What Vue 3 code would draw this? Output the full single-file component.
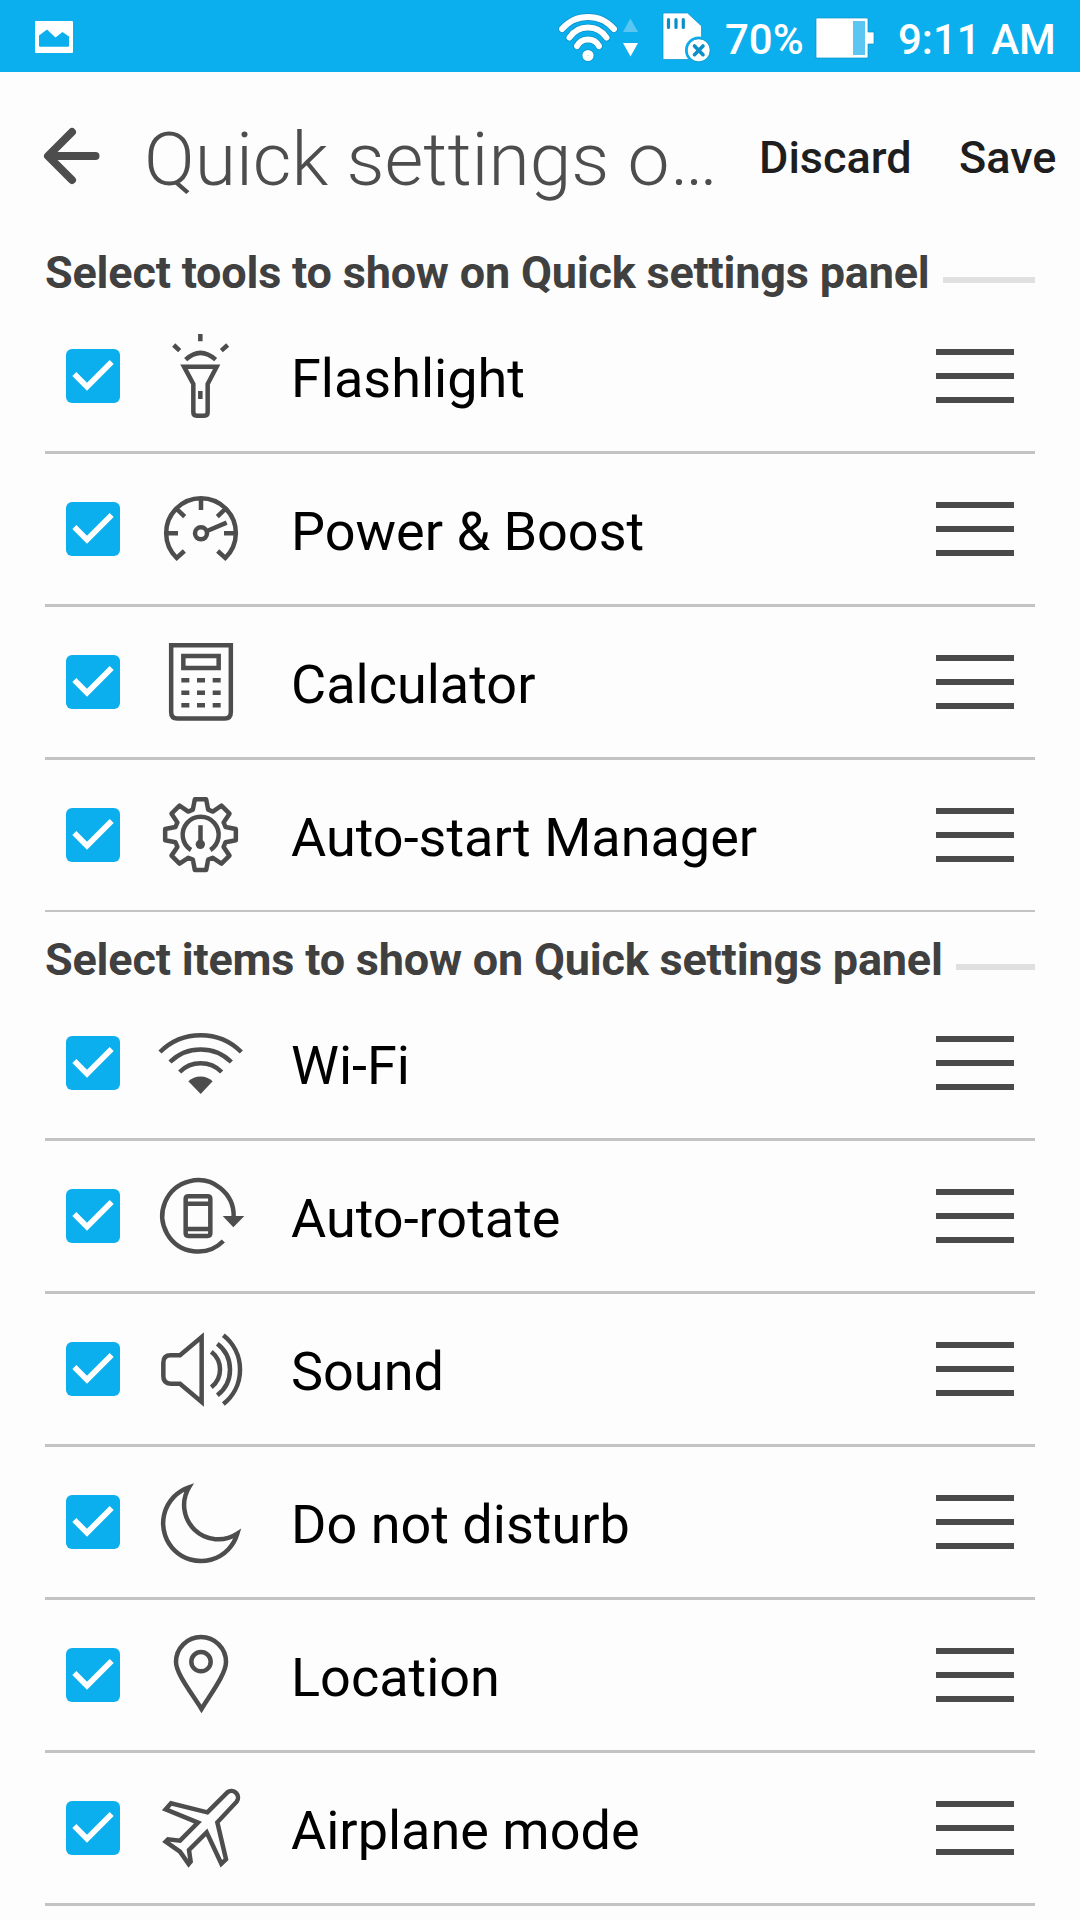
<template>
  <div class="screen">
    <header class="status">
      <svg class="status-photo" viewBox="0 0 40 33">
        <path fill="#fff" fill-rule="evenodd" d="M1 0H37Q38 0 38 1V31Q38 32 37 32H1Q0 32 0 31V1Q0 0 1 0ZM4 14.500V24.700Q4 25.700 5 25.700H33Q34 25.700 34 24.700V15.500L27.500 11L20.500 16.500L12 8.500Z" />
      </svg>
      <svg class="status-wifi" viewBox="0 0 60 50" fill="none" stroke-linecap="round">
        <g stroke="#0b8fc7" stroke-width="7.500">
          <path d="M3 16A34 34 0 0 1 55 16M10.500 24.500A22 22 0 0 1 47.500 24.500M18 33A12.500 12.500 0 0 1 40 33" />
          <circle cx="29" cy="42.500" r="2.500" />
        </g>
        <g stroke="#fff" stroke-width="6">
          <path d="M3 16A34 34 0 0 1 55 16M10.500 24.500A22 22 0 0 1 47.500 24.500M18 33A12.500 12.500 0 0 1 40 33" />
          <circle cx="29" cy="42.500" r="2.600" />
        </g>
      </svg>
      <svg class="status-traffic" viewBox="0 0 16 40">
        <path fill="#5bc6f2" d="M7.300 0.500L15 14H0Z" />
        <path fill="#fff" d="M0 25H15L7.500 38.500Z" />
      </svg>
      <svg class="status-card" viewBox="0 0 48 50">
        <path fill="#fff" stroke="#0b8fc7" stroke-width="0.700" d="M2 0H25.500L39.500 13V32H28V46.500H2Q1 46.500 1 45.500V1Q1 0 2 0Z" />
        <path stroke="#0b8fc7" stroke-width="3.200" stroke-linecap="round" d="M6.500 6.500V14.500M14 6.500V14.500M21.300 6.500V14.500" />
        <circle cx="36.700" cy="37.300" r="12.500" fill="#fff" stroke="#0cafee" stroke-width="2.500" />
        <circle cx="36.700" cy="37.300" r="11.500" fill="none" stroke="#0b8fc7" stroke-width="0.700" />
        <path stroke="#0b8fc7" stroke-width="3.600" stroke-linecap="round" d="M32.500 33L41 41.700M41 33L32.500 41.700" />
      </svg>
      <span class="status-text percent">70%</span>
      <svg class="status-battery" viewBox="0 0 60 42">
        <path fill="#fff" stroke="#0b8fc7" stroke-width="0.700" d="M1 0H51Q52 0 52 1V14H58V26H52V39Q52 40 51 40H1Q0 40 0 39V1Q0 0 1 0Z" />
        <rect x="37" y="3" width="12" height="34" fill="#5bc6f2" />
      </svg>
      <span class="status-text time">9:11 AM</span>
    </header>

    <nav class="toolbar">
      <svg class="back" viewBox="0 0 60 60">
        <path d="M31 6L7 30L31 54M8 30H54.500" />
      </svg>
      <h1 class="title">Quick settings o…</h1>
      <button class="action discard">Discard</button>
      <button class="action save">Save</button>
    </nav>

    <section v-for="group in groups" :key="group.title" class="group">
      <h2 class="group-title">
        <span>{{ group.title }}</span>
        <i class="rule"></i>
      </h2>
      <div v-for="item in group.items" :key="item.label" class="row">
        <svg class="checkbox" viewBox="0 0 162 162">
          <rect width="162" height="162" rx="18" fill="#0cafee" />
          <path d="M25 75L63 113L137 39" fill="none" stroke="#fff" stroke-width="17" />
        </svg>
        <svg class="icon" viewBox="0 0 288 288">
          <path :d="item.line" :class="{ round: item.round }" />
          <path v-if="item.fill" class="solid" :d="item.fill" />
        </svg>
        <span class="label">{{ item.label }}</span>
        <span class="handle"><i></i><i></i><i></i></span>
      </div>
    </section>
  </div>
</template>

<script setup>
// Eight-tooth gear outline around the given centre
const gear = (cx, cy) => {
  const tooth = [
    [-23, -75],
    [-17, -106],
    [17, -106],
    [23, -75],
  ]
  const points = []
  for (let i = 0; i < 8; i++) {
    const a = (i * Math.PI) / 4
    tooth.forEach(([x, y]) => {
      const px = cx + x * Math.cos(a) - y * Math.sin(a)
      const py = cy + x * Math.sin(a) + y * Math.cos(a)
      points.push(`${px.toFixed(1)} ${py.toFixed(1)}`)
    })
  }
  return `M${points.join('L')}Z`
}

const groups = [
  {
    title: 'Select tools to show on Quick settings panel',
    items: [
      {
        label: 'Flashlight',
        line: 'M145 18V40M65 51L83 68M227 51L208 68M101 95Q145 54 191 95M96 116H194L167 168V253Q167 263 157 263H134Q124 263 124 253V168ZM145 189V213',
      },
      {
        label: 'Power & Boost',
        line: 'M97 210L74 231A104.500 104.500 0 1 1 220 231L197 210M147 52V87M42 157H78M216 157H252M74 84L98 107M220 84L196 107M165 150L224 125M129 157a18 18 0 1 0 36 0a18 18 0 1 0 -36 0',
      },
      {
        label: 'Calculator',
        line: 'M57.500 33.500H236.500V235Q236.500 253.500 218 253.500H76Q57.500 253.500 57.500 235ZM94 66H200V102H94ZM88 139H112M135 139H159M182 139H206M88 176H112M135 176H159M182 176H206M88 214H112M135 214H159M182 214H206',
      },
      {
        label: 'Auto-start Manager',
        round: true,
        line: `${gear(145.5, 143)}M117 189A54 54 0 1 1 175 189M145.500 115V170`,
        fill: 'M131 172a14 14 0 1 0 28 0a14 14 0 1 0 -28 0',
      },
    ],
  },
  {
    title: 'Select items to show on Quick settings panel',
    items: [
      {
        label: 'Wi-Fi',
        line: 'M24 111A173 173 0 0 1 268 111M54 141A131 131 0 0 1 238 141M83 171A89 89 0 0 1 209 171',
        fill: 'M109 199A53 53 0 0 1 182 199L146 237Z',
      },
      {
        label: 'Auto-rotate',
        line: 'M245 146A107 107 0 1 0 214 219M109 85H167Q175 85 175 93V196Q175 204 167 204H109Q101 204 101 196V93Q101 85 109 85ZM101 107H175M101 183H175',
        fill: 'M212 144H277L244 178Z',
      },
      {
        label: 'Sound',
        line: 'M149 48V243L84 188H56Q34 188 34 166V125Q34 103 56 103H84ZM178 92A68 68 0 0 1 178 199M196 68A98 98 0 0 1 196 223M214 43A131 131 0 0 1 214 249',
      },
      {
        label: 'Do not disturb',
        line: 'M111 40A113.500 113.500 0 1 0 256 179A103 103 0 0 1 111 40Z',
      },
      {
        label: 'Location',
        line: 'M72 105A75 75 0 0 1 222 105C222 140 178 198 148.500 246C119 198 72 140 72 105ZM118 104a29 29 0 1 0 58 0a29 29 0 1 0 -58 0',
      },
      {
        label: 'Airplane mode',
        line: 'M166 97L226 37A20 20 0 0 1 254 65L196 127L222 238L208 251L164 157L111 210L116 245L110 252L84 215L41 185L48 178L84 182L138 128L41 88L57 70Z',
      },
    ],
  },
]
</script>

<style>
body {
  margin: 0;
  background: #fdfdfd;
}
</style>

<style scoped>
.screen {
  width: 1080px;
  height: 1920px;
  overflow: hidden;
  background: #fdfdfd;
  font-family: Roboto, sans-serif;
}

.status {
  display: flex;
  align-items: flex-start;
  height: 72px;
  background: #0cafee;
  color: #fff;
}

.status svg {
  flex: none;
  overflow: visible;
}

.status-photo {
  width: 40px;
  height: 33px;
  margin: 21px 0 0 35px;
}

.status-wifi {
  width: 60px;
  height: 50px;
  margin: 13px 0 0 484px;
}

.status-traffic {
  width: 16px;
  height: 40px;
  margin: 18px 0 0 4px;
}

.status-card {
  width: 48px;
  height: 50px;
  margin: 13px 0 0 23px;
}

.status-text {
  flex: none;
  font-size: 42px;
  font-weight: 500;
  line-height: 50px;
  white-space: nowrap;
}

.percent {
  width: 80px;
  margin: 15px 0 0 15px;
}

.status-battery {
  width: 60px;
  height: 42px;
  margin: 18px 0 0 11px;
}

.time {
  margin: 15px 0 0 22px;
}

.toolbar {
  display: flex;
  height: 153px;
}

.back {
  flex: none;
  width: 60px;
  height: 60px;
  margin: 54px 0 0 41px;
  fill: none;
  stroke: #4d4d4d;
  stroke-width: 8;
  stroke-linecap: round;
  stroke-linejoin: round;
}

.title {
  flex: none;
  width: 600px;
  margin: 42px 0 0 43px;
  font-size: 75px;
  font-weight: 300;
  line-height: 90px;
  color: #4d4d4d;
  white-space: nowrap;
}

.action {
  flex: none;
  height: 54px;
  margin: 59px 0 0;
  padding: 0;
  border: 0;
  background: none;
  font: 500 45px/54px Roboto, sans-serif;
  color: #1e1e1e;
  text-align: left;
}

.discard {
  width: 200px;
  margin-left: 15px;
}

.group-title {
  display: flex;
  height: 76px;
  margin: 0 45px;
  font-size: 45px;
  font-weight: 700;
  letter-spacing: -0.2px;
  line-height: 54px;
  color: #404040;
  white-space: nowrap;
}

.group-title span {
  margin-top: 21px;
}

.rule {
  flex: 1;
  height: 6px;
  margin: 52px 0 0 13px;
  background: #e0e0e0;
}

.row {
  display: flex;
  align-items: center;
  box-sizing: border-box;
  height: 153px;
  margin: 0 45px;
  padding: 0 21px;
  border-bottom: 3px solid #c3c3c3;
}

.group:nth-of-type(1) .row:last-child {
  height: 152px;
  border-bottom-width: 2px;
}

.row svg {
  flex: none;
}

.checkbox {
  width: 54px;
  height: 54px;
}

.icon {
  width: 96px;
  height: 96px;
  margin: 0 43px 0 32px;
}

.icon path {
  fill: none;
  stroke: #4d4d4d;
  stroke-width: 13.500;
}

.icon .round {
  stroke-linejoin: round;
}

.icon .solid {
  fill: #4d4d4d;
  stroke: none;
}

.label {
  flex: 1;
  padding-top: 6px;
  font-size: 54px;
  line-height: 64px;
  color: #000;
  white-space: nowrap;
}

.handle {
  display: flex;
  flex-direction: column;
  gap: 18px;
  width: 78px;
}

.handle i {
  height: 6px;
  background: #4a4a4a;
}
</style>
